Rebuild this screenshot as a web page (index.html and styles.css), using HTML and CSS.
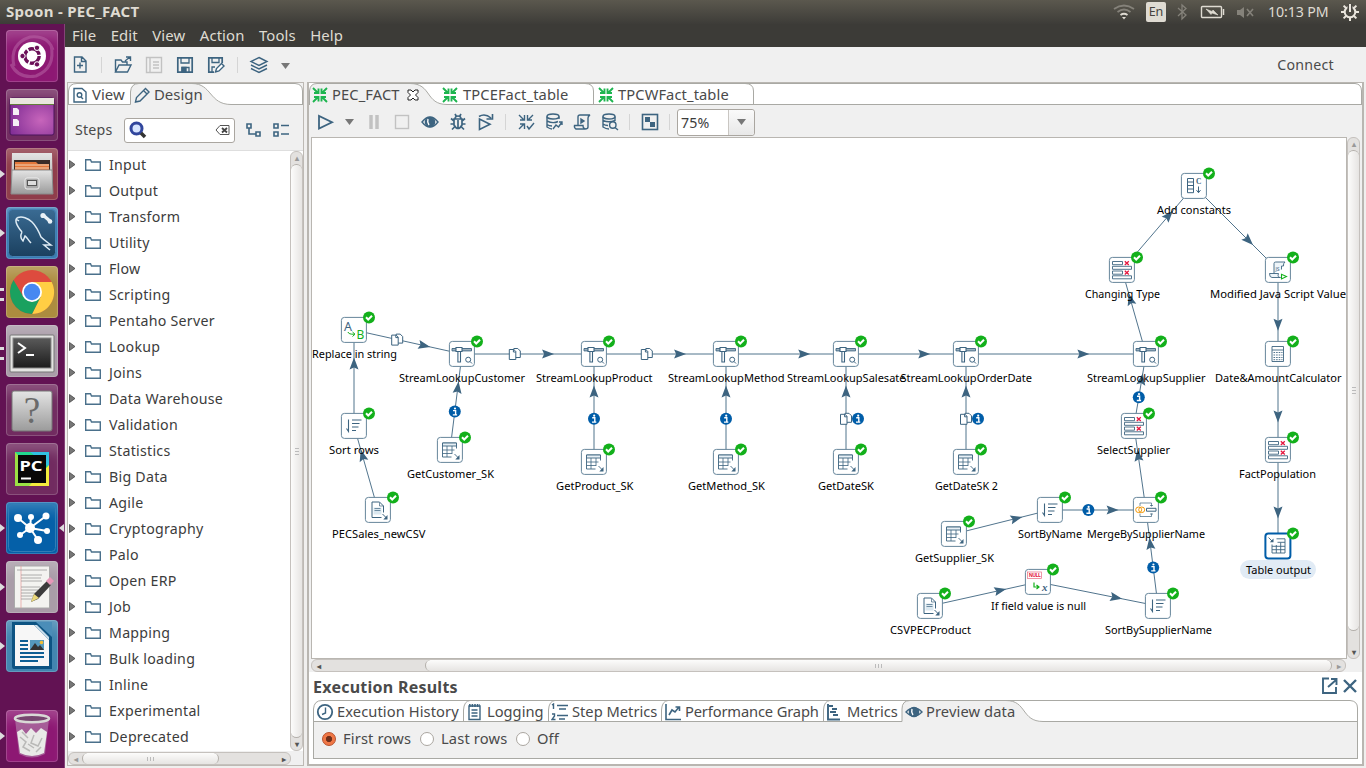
FILE: index.html
```html
<!DOCTYPE html>
<html lang="en">
<head>
<meta charset="utf-8">
<title>Spoon - PEC_FACT</title>
<link rel="stylesheet" href="styles.css">
</head>
<body>
<svg class="defs" width="0" height="0">
  <defs>
    <linearGradient id="steel" x1="0" y1="0" x2="0" y2="1"><stop offset="0" stop-color="#e4e4e4"/><stop offset="1" stop-color="#9b9b9b"/></linearGradient>
    <linearGradient id="dark" x1="0" y1="0" x2="0" y2="1"><stop offset="0" stop-color="#5a5a5a"/><stop offset="1" stop-color="#1c1c1c"/></linearGradient>
    <linearGradient id="sea" x1="0" y1="0" x2="0" y2="1"><stop offset="0" stop-color="#3a6b93"/><stop offset="1" stop-color="#1b405f"/></linearGradient>
    <radialGradient id="desk" cx=".7" cy=".6" r=".8"><stop offset="0" stop-color="#c765bb"/><stop offset="1" stop-color="#7d2b93"/></radialGradient>
    <g id="i-badge"><circle r="6" fill="#13b01b"/><path d="M-3-.2L-.8 2 3-1.8" fill="none" stroke="#fff" stroke-width="2"/></g>
    <g id="i-info"><circle r="6" fill="#005da8"/><path d="M-1.8-1H.8V3M-2 3.3H2.3" fill="none" stroke="#fff" stroke-width="1.4"/><circle cx=".2" cy="-3.1" r="1.1" fill="#fff"/></g>
    <g id="i-copy" fill="#fff" stroke="#3d6480" stroke-width="1"><path d="M-1-5.5H3L5.5-3V3.5H-1Z"/><path d="M-5.5-4.5H-1L1-2.5V5.5H-5.5Z"/><path d="M-1.4-4.5V-2H1" fill="none"/></g>
    <path id="i-arrow" d="M6 0L-6-4.5-4 0-6 4.5Z" fill="#3d6480"/>
    <g id="s-lookup" fill="none" stroke="#3d6480"><path d="M-9.5-5H10V-2.6H-9.5Z" fill="#9db1bf" stroke-width=".9"/><path d="M-5.5-6H.5V-2H-5.5ZM-3.6-2V8.5H-1V-2" fill="#fff" stroke-width="1.1"/><circle cx="6.7" cy="6.2" r="2.5"/><path d="M8.5 8L10.5 10"/></g>
    <g id="s-table" fill="none" stroke="#3d6480" stroke-width=".9"><path d="M7-1V-6.5H-7V7.5H2"/><path d="M-7-3.5H7V-6.5H-7Z" fill="#e8f0f6"/><path d="M-7 .5H5M-7 4H2.5M-2.5-3.5V7.5M2.5-3.5V4.5" stroke-width=".8"/><path d="M5 4.5L9 8.5"/><path d="M10 5.5V10H5.8Z" fill="#3d6480" stroke="none"/></g>
    <g id="s-file" fill="none" stroke="#3d6480"><path d="M2-7.5H-5.5V8H4M2-7.5L6-3.5V3"/><path d="M-4-2H4V5H-4Z" fill="#dbe8f0" stroke="none"/><path d="M2-7V-3.5H6M-3-1H3M-3 1H3" stroke-width=".7"/><path d="M5 4.5L9 8.5"/><path d="M10 5.5V10H5.8Z" fill="#3d6480" stroke="none"/></g>
    <g id="s-sort" fill="none" stroke="#3d6480"><path d="M-5-6V5M-7 3L-5 6V3M-1.5-5.5H8M-1.5-2H6M-1.5 1.5H5M-1.5 5H2.5" stroke-width="1.1"/></g>
    <g id="s-select" fill="#fff" stroke="#3d6480" stroke-width=".9"><path d="M-9-8H1V-4.8H-9ZM-9-3.2H10V-.2H-9ZM-9 1.5H1V4.7H-9ZM-9 6.3H10V9.3H-9Z"/><path d="M3.3-8.3L7.3-4.6M7.3-8.3L3.3-4.6M3.3 1.3L7.3 5M7.3 1.3L3.3 5" stroke="#e5173f" stroke-width="1.3"/></g>
    <g id="s-replace"><text x="-9.5" y="1" font-size="12.5" fill="#3d6480">A</text><text x="3" y="9.3" font-size="12" fill="#13b01b">B</text><path d="M-5.5 2.5Q-5 5 1 4.7M-1 2.5L1.5 4.7-1 7" fill="none" stroke="#13b01b"/></g>
    <g id="s-constant" fill="none" stroke="#3d6480"><path d="M-6-7H0V7.2H-6ZM-6-3.5H0M-6 0H0M-6 3.5H0M5 1V7M3 4.7L5 7.2 7 4.7"/><text x="2.5" y="-2" class="serif" font-size="7.5" font-weight="bold" fill="#3d6480" stroke="none">C</text></g>
    <g id="s-script" fill="none" stroke="#3d6480" stroke-width=".9"><path d="M-3.5 4V-6Q-3.5-7.5-1.8-7.5H7.5Q5.5-6 6-3.5H4V0M-8 4H1Q-.5 8 3 8H-5.5Q-8 8-8 4" fill="#eef5f9"/><text x="-2" y="1.5" font-size="5" fill="#3d6480" stroke="none">JS</text><path d="M4 4.8V9.5L9 7.1Z" fill="#fff" stroke="#13b01b" stroke-width="1.1"/></g>
    <g id="s-calc" fill="none" stroke="#3d6480" stroke-width=".9"><path d="M-5.5-7H6V8H-5.5ZM-5.5-3.5H6"/><path d="M-4-1H5M-4 1.5H5M-4 4H5M-4 6.2H5" stroke-dasharray="1.6 1"/></g>
    <g id="s-merge" fill="none" stroke="#3d6480"><ellipse cx="-6.8" cy=".3" rx="3" ry="2.8" stroke="#f29a0c"/><ellipse cx="-3.8" cy=".3" rx="3" ry="2.8" stroke="#f29a0c"/><path d="M-5.5-3.5V-6.5H6V-3M-5.5 4V7H6V4M4.5-4H7.5M4.5 4.5H7.5" stroke-width=".7"/><path d="M1-1.2H10.5V1.7H1Z" fill="#fff"/></g>
    <g id="s-null"><rect x="-10" y="-9.5" width="14" height="6.5" fill="#fff" stroke="#e96a80" stroke-width=".7"/><text x="-8.8" y="-4.3" font-size="5" font-weight="bold" fill="#e5173f" textLength="12">NULL</text><path d="M-3.5 1V5.5H1M-1 3.5L1.5 5.5-1 7.5" fill="none" stroke="#13b01b" stroke-width="1.2"/><text x="4.5" y="9" class="serif" font-size="11" font-weight="bold" font-style="italic" fill="#3d6480">x</text></g>
    <g id="s-output" fill="none" stroke="#3d6480" stroke-width=".9"><path d="M-1-6.7H7.5V7.5H-5.5V-1M7.5-3.2H0M-5.5 .8H7.5M-5.5 4.2H7.5M-1.2-.5V7.5M3.2-3V7.5M-9-8L-5-4"/><path d="M-4-7V-3.3H-7.7Z" fill="#3d6480" stroke="none"/></g>
    <g id="i-trans" fill="none" stroke="#1db54f" stroke-width="1.9"><path d="M1 1L6 6M2 6H6.5V1.5M15 1L10 6M9.5 1.5V6H14M1 15L6 10M2 10H6.5V14.5M15 15L10 10M9.5 14.5V10H14"/></g>
  </defs>
</svg>

<header class="panel">
  <div class="title">Spoon - PEC_FACT</div>
  <div class="indicators">
    <svg width="22" height="18" fill="none" stroke-width="1.8"><path d="M1 6Q11-1 21 6M4.5 9Q11 4 17.5 9" stroke="#85827a"/><path d="M7.5 12Q11 9.5 14.5 12" stroke="#dfdbd2"/><path d="M9 14H13L11 16.5Z" fill="#dfdbd2"/></svg>
    <span class="lang">En</span>
    <svg width="10" height="18" fill="none" stroke="#85827a" stroke-width="1.3"><path d="M1 5L9 12 5 16V2L9 5.5 1 13"/></svg>
    <svg width="26" height="18" fill="none" stroke="#dfdbd2" stroke-width="1.4"><rect x="1.5" y="3.5" width="20" height="11" rx="1"/><path d="M23.5 6V12" stroke-width="1.5"/><path d="M6 6L12 8.5 13 7 18 12 12 10 11 11.5Z" fill="#dfdbd2" stroke-width=".6"/></svg>
    <svg width="18" height="18"><path d="M1 7H4L8 4V15L4 12H1Z" fill="#85827a"/><path d="M11 6L17 13M17 6L11 13" stroke="#85827a" stroke-width="1.6"/></svg>
    <span class="clock">10:13 PM</span>
    <svg width="18" height="18" fill="none" stroke="#eae6dd"><circle cx="9" cy="9" r="5.3" stroke-width="2"/><path d="M9 15V18M0 9H3M15 9H18M2.6 2.6L5 5M13 13L15.4 15.4M2.6 15.4L5 13M15.4 2.6L13 5" stroke-width="2"/><path d="M9 1V8" stroke="#4b4943" stroke-width="5"/><path d="M9 1V9" stroke-width="2"/></svg>
  </div>
</header>

<div class="shell">
<nav class="launcher">
  <div class="tile t-dash"><svg viewBox="0 0 52 52"><path d="M8 36Q3 14 24 7Q42 5 47 20M45 15Q50 38 30 46Q12 49 5 34" fill="none" stroke="#bb6aaa" stroke-width="3" opacity=".5"/><circle cx="26" cy="26" r="14" fill="#fff"/><circle cx="26" cy="26" r="7.2" fill="none" stroke="#6b1058" stroke-width="3.4" stroke-dasharray="13.4 1.7"/><g fill="#6b1058" stroke="#fff" stroke-width="1"><circle cx="16.5" cy="26" r="2.7"/><circle cx="31" cy="17.8" r="2.7"/><circle cx="31" cy="34.4" r="2.7"/></g></svg></div>
  <div class="tile t-plum"><svg viewBox="0 0 52 52"><rect x="4" y="9" width="44" height="37" rx="2" fill="url(#desk)" stroke="#4b155b"/><path d="M4 9H48V15H4Z" fill="#e9e7de"/><path d="M4 15.5H48" stroke="#637d3a"/><path d="M7 19H11L13 21V26H7ZM7 30H11L13 32V37H7Z" fill="#f5eff5"/></svg></div>
  <div class="tile t-red run"><svg viewBox="0 0 52 52"><path d="M6 5H46L47 45H5Z" fill="url(#steel)"/><path d="M8 12H44V22H8Z" fill="#3a2c28"/><path d="M9 14H30L32 16H43V22H9Z" fill="#e2763a"/><path d="M9 17H43M9 20H43" stroke="#f3d5b8"/><path d="M6 22H46L47 46H5Z" fill="url(#steel)" stroke="#8a8a8a"/><rect x="19" y="30" width="14" height="11" rx="2" fill="#aaa" stroke="#eee"/><rect x="21.5" y="32.5" width="9" height="5" fill="#ddd" stroke="#555"/></svg></div>
  <div class="tile t-sql run"><svg viewBox="0 0 52 52"><rect x="2.5" y="2.5" width="47" height="47" rx="4" fill="url(#sea)" stroke="#4481b5"/><path d="M16 25C10 18 8 12 12 10.5C16 9 22 11 26 15C31 20 33 25 35 30C38 33 41 35 45 38L38 38 44 43M16 25C14 29 15 32 17 34L19 29C21 30 22 33 25 36M13 14L10 12" fill="none" stroke="#dfecf5" stroke-width="1.5"/><path d="M37 8L45 15" stroke="#e9f1f7" stroke-width="3.2"/><circle cx="37" cy="8.5" r="2.6" fill="#e9f1f7"/><circle cx="44" cy="14.5" r="2.3" fill="#e9f1f7"/></svg></div>
  <div class="tile t-gold multi"><svg viewBox="0 0 52 52"><circle cx="26" cy="26" r="22" fill="#dd4b3e"/><path d="M26 16H45.7A22 22 0 0 1 26 48L34.5 31Z" fill="#ffce44"/><path d="M7.5 14L17.5 31 26 36 34.5 31 26 48A22 22 0 0 1 7.5 14Z" fill="#1aa15f"/><circle cx="26" cy="26" r="10" fill="#fff"/><circle cx="26" cy="26" r="8.2" fill="#4688f1"/></svg></div>
  <div class="tile t-silver multi"><svg viewBox="0 0 52 52"><rect x="4" y="10" width="44" height="37" rx="1" fill="#e4e4e2" stroke="#777"/><rect x="7" y="13" width="38" height="30" fill="url(#dark)" stroke="#888"/><path d="M18 18L25 23 18 28M26 30H34" transform="translate(-6 0)" fill="none" stroke="#fff" stroke-width="2"/></svg></div>
  <div class="tile t-plum"><svg viewBox="0 0 52 52"><rect x="6" y="7" width="40" height="40" rx="2" fill="url(#steel)" stroke="#777"/><text x="26" y="39" text-anchor="middle" class="serif" font-size="37" fill="#6a6a6a">?</text></svg></div>
  <div class="tile t-plum"><svg viewBox="0 0 52 52"><rect x="9" y="9" width="34" height="34" fill="#22d88f"/><path d="M9 9L43 43H9Z" fill="#9be044"/><path d="M24 9H43V24Z" fill="#31c1e2"/><path d="M43 22V43H23Z" fill="#f4ed3d"/><rect x="12" y="12" width="28" height="28" fill="#080808"/><text x="13.5" y="27.5" font-size="15" font-weight="bold" fill="#fff" textLength="23" lengthAdjust="spacingAndGlyphs">PC</text><path d="M15 35.5H25" stroke="#fff" stroke-width="2"/></svg></div>
  <div class="tile t-blue run focus"><svg viewBox="0 0 52 52"><rect x="2.5" y="2.5" width="47" height="47" rx="4" fill="none" stroke="#337db5"/><g stroke="#fff" stroke-width="2"><path d="M24 26L12 16M24 26L25 15M24 26L40 14M24 26L41 29M24 26L14 33M24 26L32 38"/></g><g fill="#fff"><circle cx="24" cy="26" r="5"/><circle cx="12" cy="16" r="4"/><circle cx="25" cy="15" r="3"/><circle cx="40" cy="14" r="3.5"/><circle cx="41" cy="29" r="3"/><circle cx="14" cy="33" r="3"/><circle cx="32" cy="38" r="4"/></g></svg></div>
  <div class="tile t-silver run"><svg viewBox="0 0 52 52"><rect x="8.5" y="5" width="35" height="42" fill="#f3f3f0" stroke="#aaa"/><path d="M15 5V47" stroke="#e79a9a" stroke-width=".7"/><path d="M11 9H41M15 14H36M15 17H35M15 20H36M15 26H34M15 29H32M15 32H31M15 35H30M15 38H30" stroke="#9a9a9a" stroke-width=".8"/><path d="M25 41L28 33 41 20 45 24 32 38Z" fill="#3b3b3b"/><path d="M25 41L28 33 33 37Z" fill="#e9d779"/><path d="M40 20L44 16 48 20 44 24Z" fill="#e798b9"/></svg></div>
  <div class="tile t-writer run"><svg viewBox="0 0 52 52"><path d="M6 2H44L46 4V49H8Q6 49 6 46Z" fill="#0d5382"/><path d="M30 2H46V17Z" fill="#4b8db8"/><path d="M9 5H28L43 20V46H9Z" fill="#f7f7f7"/><path d="M28 5L43 20V17L31 5Z" fill="#c7dce9"/><path d="M14 21H22M14 25H22M14 29H22M14 33H38M14 37H38M14 41H32" stroke="#0e5f94" stroke-width="1.8"/><rect x="24" y="20" width="14" height="10" fill="#5599bd"/><path d="M24 30L29 23 32 27 34 25 38 30Z" fill="#333"/><circle cx="35.5" cy="22.5" r="1.8" fill="#f1bd36"/></svg></div>
  <div class="tile t-dash run trash"><svg viewBox="0 0 52 52"><path d="M9 9L13 44Q26 51 39 44L43 9Z" fill="#b993b4" opacity=".55"/><path d="M11 22L16 19 20 24 25 18 30 23 35 18 41 22 38 43Q26 49 14 43Z" fill="#e9e9e7"/><path d="M14 27L20 32 17 37 24 41M28 25L25 33 32 36 36 28M30 42L35 37M16 22L22 28M22 34L28 38" stroke="#b9b9b7" stroke-width="1.5" fill="none"/><ellipse cx="26" cy="8.5" rx="17" ry="3.8" fill="#77466f" stroke="#d9d9d6" stroke-width="2.6"/></svg></div>
</nav>

<main class="app">
  <div class="menubar"><span>File</span><span>Edit</span><span>View</span><span>Action</span><span>Tools</span><span>Help</span></div>
  <div class="toolbar main-tools">
    <svg class="ic"><path d="M4.5 2H12L16 6V17H4.5ZM11.5 2V6.5H16M10 7.5V13.5M7 10.5H13"/></svg>
    <i class="rule"></i>
    <svg class="ic"><path d="M2.5 17V5H8L9.5 7H14V10M2.5 17L6 10H18L14.5 17ZM12 6L17 2M13 2H17.5V6"/></svg>
    <svg class="ic off"><path d="M2.5 2.5H17.5V17.5H2.5ZM6 3V17M9 7H15M9 10H15M9 13H15"/></svg>
    <svg class="ic"><path d="M2.8 2.8H17.2V17.2H2.8Z" stroke-width="1.7"/><path d="M6 3V8H14V3M7 17V12.5H14V17" stroke-width="1.3"/><path d="M7 12.5H11V17H7Z" fill="#3d6480"/></svg>
    <svg class="ic"><path d="M8 17.2H2.8V2.8H16.2V8" stroke-width="1.7"/><path d="M6 3V7.5H13V3M6 17V12H9" stroke-width="1.3"/><path d="M9.5 17L10.5 13.5 15.5 8.5 18 11 13 16Z" fill="#fff"/></svg>
    <i class="rule"></i>
    <svg class="ic"><path d="M10 2.5L18 6.5 10 10.5 2 6.5ZM2 10L10 14 18 10M2 13.5L10 17.5 18 13.5"/></svg>
    <svg class="drop"><path d="M0 0H9L4.5 6Z"/></svg>
    <span class="connect">Connect</span>
  </div>

  <div class="work">
    <aside class="side">
      <div class="tabs">
        <svg class="tabshape" viewBox="0 0 235 22"><path class="w" d="M.5 22V8Q1 .5 9 .5H227Q234.5 1 234.5 8V22Z"/><path class="g" d="M62.5 22V9Q63 .5 71 .5H124C144 .5 141 22 163 22Z"/><path class="l" d="M.5 22V8Q1 .5 9 .5H227Q234.5 1 234.5 8V22M0 21.5H62.5V9Q63 .5 71 .5H124C144 .5 141 21.5 163 21.5H235"/></svg>
        <div class="tabrow side-tabs">
          <svg class="ic s"><path d="M2 1.5H10L14 5V15H2Z"/><circle cx="7.5" cy="8" r="2.3"/><path d="M9 10L11 12"/></svg><span class="tv">View</span>
          <svg class="ic s"><path d="M1.5 15L2.5 10.5 11.5 1.5 15 5 6 14ZM9.5 3.5L13 7"/></svg><span class="td">Design</span>
        </div>
      </div>
      <div class="steps">
        <span>Steps</span>
        <div class="search">
          <svg width="18" height="18"><circle cx="7.5" cy="7.5" r="5.5" fill="#d7e5ff" stroke="#31469d" stroke-width="3"/><path d="M12 12L16 16" stroke="#333" stroke-width="3.5"/></svg>
          <svg width="15" height="12"><path d="M5 1.5H14V10.5H5L1 6Z" fill="#fff" stroke="#555"/><path d="M7 4L12 8.5M12 4L7 8.5" stroke="#444" stroke-width="1.8"/></svg>
        </div>
        <svg class="ic s"><path d="M2 2H6V6H2ZM11 10H15V14H11ZM4 6V12H11" stroke-width="1.6"/></svg>
        <svg class="ic wide"><path d="M2 2H6V6H2ZM2 10H6V14H2ZM9 3.5H17M9 12H17" stroke-width="1.6"/></svg>
      </div>
      <div class="treebox">
        <div class="tree" id="tree"></div>
        <div class="vscroll"><b>&#9652;</b><div class="thumb"></div><b class="on">&#9662;</b></div>
      </div>
      <div class="hscroll side-h"><b>&#9666;</b><div class="thumb"><u></u></div><div class="rest"></div><b class="on">&#9656;</b></div>
    </aside>

    <div class="sash"></div>

    <section class="editor">
      <div class="tabs">
        <svg class="tabshape" viewBox="0 0 1053 22" preserveAspectRatio="none"><path class="w" d="M0 22V0H1053V22Z"/><path class="g" d="M0 22V8Q1 .5 8 .5H101C123 .5 116 22 138 22Z"/><path class="l" d="M.5 22V8Q1 .5 8 .5H101C123 .5 116 21.5 138 21.5H1053M8 .5H1046Q1052.5 1 1052.5 8V22M276 .5Q284.5 .5 284.5 8V21M436 .5Q444.5 .5 444.5 8V21"/></svg>
        <div class="tabrow edit-tabs">
          <svg width="16" height="16"><use href="#i-trans"/></svg><span class="e1">PEC_FACT</span><svg class="cross" width="12" height="12"><path d="M1 1H4L6 3 8 1H11V3.5L8.5 6 11 8.5V11H8L6 9 4 11H1V8.5L3.5 6 1 3.5Z" fill="#fff" stroke="#222"/></svg>
          <svg width="16" height="16"><use href="#i-trans"/></svg><span class="e2">TPCEFact_table</span>
          <svg width="16" height="16"><use href="#i-trans"/></svg><span class="e3">TPCWFact_table</span>
        </div>
      </div>
      <div class="toolbar edit-tools">
        <svg class="ic"><path d="M4 4V16.5L17 10.2Z" stroke-width="1.8"/></svg>
        <svg class="drop n"><path d="M2 0H11L6.5 6Z"/></svg>
        <svg class="ic off"><path d="M7 3V17M13 3V17" stroke-width="3.5"/></svg>
        <svg class="ic off"><rect x="3.5" y="3.5" width="13" height="13"/></svg>
        <svg class="ic"><path d="M2 10Q10 0 18 10Q10 20 2 10Z"/><circle cx="10" cy="10" r="4.6" fill="#3d6480"/><path d="M8 7Q7 10 9 13" stroke="#fff"/></svg>
        <svg class="ic"><path d="M6 7H14V13Q10 20 6 13ZM7 7Q7 4 10 4Q13 4 13 7M7 2L8.5 4.5M13 2L11.5 4.5M6 9L3 6.5M14 9L17 6.5M6 12H2.5M14 12H17.5M6.5 15L4 17.5M13.5 15L16 17.5M10 8V17" stroke-width="1.7"/></svg>
        <svg class="ic"><path d="M3.5 7V17.5L14 12.2ZM3 4.5Q9 1 15 6M10.5 7H16.5V2" stroke-width="1.6"/></svg>
        <i class="rule"></i>
        <svg class="ic"><path d="M3 3L8 8M4 8H8.5V3M17 3L12 8M11.5 3V8H16M3 17L8 12M4 12H8.5V17M11 14L13 17 18 11"/></svg>
        <svg class="ic"><path d="M15 7V4.5M3 4.5V15Q6 17 8 17M3 9Q9 12 14 9.5M3 12.5Q5 14 8 14M9 17L12 13 14.5 15 18 10M15 10H18V13"/><ellipse cx="9" cy="4.5" rx="6" ry="2.5"/></svg>
        <svg class="ic"><path d="M6 13V5Q6 3 8 3H18Q16 4 16 6V15Q16 17 13 17H4Q2 16 2.5 13.5H11Q11 17 14 17"/><path d="M9 7V11L12 9Z" fill="#3d6480"/></svg>
        <svg class="ic"><path d="M15 9V4.5M3 4.5V15Q6 17 9 17M3 8.5Q9 11 15 8.5M3 12Q5 13.5 8 13.5"/><ellipse cx="9" cy="4.5" rx="6" ry="2.5"/><circle cx="12.8" cy="13" r="3.2"/><path d="M15 15.5L18 18"/></svg>
        <i class="rule"></i>
        <svg class="ic"><rect x="2.5" y="2.5" width="15" height="15" stroke-width="1.6"/><path d="M5 5H10V10H5ZM10 10H15V15H10Z" fill="#3d6480" stroke="none"/></svg>
        <i class="rule"></i>
        <div class="combo"><span>75%</span><em><svg class="drop"><path d="M0 0H9L4.5 6Z"/></svg></em></div>
      </div>
      <div class="canvasbox">
        <svg class="canvas" id="canvas" viewBox="312 138 1034 520"></svg>
        <div class="vscroll"><b>&#9652;</b><div class="thumb"></div><div class="rest"></div><b class="on">&#9662;</b></div>
      </div>
      <div class="hscroll edit-h"><b class="on">&#9666;</b><div class="rest"></div><div class="thumb"><u></u></div><b>&#9656;</b></div>
      <div class="results">
        <div class="rhead"><h2>Execution Results</h2>
          <svg class="ic"><path d="M9 2.5H3V17H16V11M8 11L16 4M11 3H16.5V9" stroke-width="1.9"/></svg><svg class="ic"><path d="M4 4L16 16M16 4L4 16" stroke-width="2.4"/></svg></div>
        <div class="tabs">
          <svg class="tabshape" viewBox="0 0 1045 22" preserveAspectRatio="none"><path class="w" d="M0 22V0H1045V22Z"/><path class="g" d="M589 22V9Q589 .5 597 .5H693C714 .5 708 22 730 22Z"/><path class="l" d="M.5 22V9Q1 .5 9 .5H1037Q1044.5 1 1044.5 8V22M150.5 21V10Q151 1 157 .5M235.5 21V10Q236 1 242 .5M348.5 21V10Q349 1 355 .5M510.5 21V10Q511 1 517 .5M0 21.5H589V9Q589 .5 597 .5H693C714 .5 708 21.5 730 21.5H1045"/></svg>
          <div class="tabrow res-tabs">
            <svg class="ic t"><circle cx="9" cy="9" r="7.2" stroke-width="1.8"/><path d="M9.5 4.5V10L6 11.5"/></svg><span class="r1">Execution History</span>
            <svg class="ic t"><path d="M2 3H13V16.5H2ZM4.5 7H10.5M4.5 10H10.5M4.5 13H10.5"/><path d="M2 2.5H13" stroke-width="3" stroke-dasharray="1.6 1"/></svg><span class="r2">Logging</span>
            <svg class="ic t"><path d="M6 2.5H17M8 6H15M6 12.5H17M8 16H14M1 2L2.5 1V6M1 11H3.5V13L1 16.5H4.5"/></svg><span class="r3">Step Metrics</span>
            <svg class="ic t"><path d="M2 1V16.5H17M5 12L8 7 11 9 15 4M11.5 4H15.5V8" stroke-width="1.6"/></svg><span class="r4">Performance Graph</span>
            <svg class="ic t"><path d="M3 1V16.5H15M4 3H8M7 6H12M5 9H11M8 12H13" stroke-width="1.9"/></svg><span class="r5">Metrics</span>
            <svg class="ic t"><path d="M1 9Q9 1 17 9Q9 17 1 9Z"/><circle cx="9" cy="9" r="4.6" fill="#3d6480"/><path d="M7 6Q6 9 8 12" stroke="#fff"/></svg><span class="r6">Preview data</span>
          </div>
        </div>
        <div class="radios"><i class="radio sel"></i><span class="o1">First rows</span><i class="radio"></i><span class="o2">Last rows</span><i class="radio"></i><span class="o3">Off</span></div>
      </div>
    </section>
  </div>
</main>
</div>
<script src="app.js"></script>
</body>
</html>
```
FILE: styles.css
```css
* { box-sizing: border-box; }
body { margin: 0; width: 1366px; height: 768px; overflow: hidden; display: flex; flex-direction: column; background: #f0efee; color: #4a4a4a; font: 14.2px/20px "Noto Sans", "Open Sans", sans-serif; }
.defs { display: block; width: 0; height: 0; flex: none; }
svg { display: block; flex: none; }
span { white-space: nowrap; }
.serif { font-family: "Liberation Serif", serif; }

.panel { height: 24px; flex: none; display: flex; align-items: center; justify-content: space-between; padding: 0 7px 0 6px; background: linear-gradient(#5b584e, #3d3c38); color: #dfdbd2; }
.title { font-weight: bold; font-size: 15px; letter-spacing: .3px; padding-bottom: 2px; }
.indicators { display: flex; align-items: center; }
.indicators > :nth-child(1) { margin-right: 11px; }
.lang { width: 20px; height: 20px; border-radius: 2px; background: #dfdbd2; color: #45433e; font-size: 12.5px; text-align: center; margin-right: 11px; }
.indicators > :nth-child(3) { margin-right: 13px; }
.indicators > :nth-child(4) { margin-right: 10px; }
.indicators > :nth-child(5) { margin-right: 14px; }
.clock { width: 61px; margin-right: 12px; letter-spacing: -.1px; }

.shell { display: flex; flex: 1; min-height: 0; }
.launcher { width: 65px; flex: none; display: flex; flex-direction: column; gap: 7px; padding: 6px 0 6px 6px; background: #621253; border-right: 1px solid #854378; }
.tile { position: relative; width: 52px; height: 52px; flex: none; border-radius: 4px; box-shadow: inset 0 0 0 1px rgba(255,255,255,.18), inset 0 14px 12px -6px rgba(255,255,255,.2); }
.tile svg { width: 52px; height: 52px; }
.t-dash { background: #8d1873; }
.t-plum { background: #712b60; }
.t-red { background: #8f3c4a; }
.t-sql { background: #397bb3; }
.t-gold { background: #ac8c3f; }
.t-silver { background: #a99ca8; }
.t-blue { background: #0560a8; }
.t-writer { background: #4285b0; }
.trash { margin-top: auto; }
.run::before { content: ""; position: absolute; left: -6px; top: 22px; border: 4px solid transparent; border-left: 5px solid #ddd; border-right: 0; }
.multi::before { content: ""; position: absolute; left: -6px; top: 22px; width: 4px; height: 7px; border: solid #ddd; border-width: 3px 0; }
.focus::after { content: ""; position: absolute; right: -6px; top: 22px; border: 4px solid transparent; border-right: 5px solid #ddd; border-left: 0; }

.app { flex: 1; min-width: 0; display: flex; flex-direction: column; }
.menubar { height: 23px; flex: none; display: flex; gap: 14.5px; padding: 1px 7px; background: #3c3b37; color: #dfdbd2; font-size: 14.9px; letter-spacing: .1px; }
.toolbar { display: flex; align-items: center; }
.main-tools { height: 35px; flex: none; gap: 11px; padding: 0 32px 0 5px; background: #f0f0f0; }
.ic { width: 20px; height: 20px; fill: none; stroke: #3d6480; stroke-width: 1.4; }
.ic.s { width: 16px; height: 16px; }
.ic.t { width: 18px; height: 18px; }
.ic.wide { width: 18px; height: 16px; }
.ic.off { stroke: #c2c2c2; }
.drop { width: 9px; height: 6px; fill: #777; }
.main-tools .drop { margin: 2px 0 0 1px; }
.drop.n { width: 13px; }
.rule { width: 1px; height: 16px; background: #d5d5d5; flex: none; }
.connect { margin-left: auto; letter-spacing: .25px; }

.work { flex: 1; min-height: 0; display: flex; padding: 0 2px 2px; }
.side { width: 237px; flex: none; border: 1px solid #bdb9b4; display: flex; flex-direction: column; background: #f0f0f0; }
.sash { width: 3px; flex: none; }
.editor { flex: 1; min-width: 0; border: 2px solid #b9b6b1; border-top-width: 1px; display: flex; flex-direction: column; background: #f0f0f0; }

.tabs { display: grid; height: 22px; flex: none; }
.tabs > * { grid-area: 1 / 1; }
.tabshape { width: 100%; height: 22px; }
.tabshape .w { fill: #fff; }
.tabshape .g { fill: #f0f0f0; }
.tabshape .l { fill: none; stroke: #a9a9a4; stroke-width: 1; }
.tabrow { display: flex; align-items: center; height: 23px; }
.tabrow span { padding-bottom: 2px; }
.side-tabs { padding-left: 4px; font-size: 14.9px; }
.tv { width: 37px; margin-left: 4px; }
.td { margin-left: 4px; }
.side-tabs svg:nth-child(3) { margin-left: 5px; }
.edit-tabs { padding-left: 3px; font-size: 14.7px; }
.e1 { width: 71px; margin-left: 4px; letter-spacing: .1px; }
.cross { margin: 0 23px 0 4px; }
.e2 { width: 130px; margin-left: 5px; letter-spacing: .1px; }
.edit-tabs svg:nth-child(6) { margin-left: 5px; }
.e3 { margin-left: 4px; letter-spacing: .1px; }

.steps { height: 46px; flex: none; display: flex; align-items: center; padding: 5px 0 0 7px; border-bottom: 1px solid #dedede; }
.steps > span { width: 38px; letter-spacing: .2px; }
.steps > svg { margin-left: 10px; }
.steps > .wide { margin-left: 11px; }
.search { width: 111px; height: 25px; margin-left: 11px; display: flex; align-items: center; justify-content: space-between; padding: 0 4px; background: #fff; border: 1px solid #aaa6a0; border-radius: 3px; }
.treebox { flex: 1; min-height: 0; display: flex; background: #fff; }
.tree { flex: 1; padding-top: 1px; min-height: 0; overflow: hidden; color: #3c3c3c; }
.node { height: 26px; display: flex; align-items: center; }
.node span { margin-left: 7px; letter-spacing: .26px; }

.vscroll { width: 13px; flex: none; display: flex; flex-direction: column; background: #e3e1df; border-radius: 6px; border: 1px solid #c5c1bd; }
.vscroll b { height: 12px; font-size: 8px; line-height: 12px; text-align: center; color: #999; flex: none; }
.vscroll b.on, .hscroll b.on { color: #555; }
.vscroll .thumb { flex: 1; background: linear-gradient(90deg, #fcfcfb, #e6e4e2); border: 1px solid #b3afaa; border-width: 1px 0; border-radius: 6px; display: flex; align-items: center; justify-content: center; }
.vscroll .thumb::after { content: ""; width: 4px; height: 7px; background: repeating-linear-gradient(#bbb 0 1px, transparent 1px 3px); }
.vscroll .rest { height: 15px; }
.hscroll { height: 13px; flex: none; display: flex; background: #e3e1df; border-radius: 6px; border: 1px solid #c5c1bd; }
.hscroll b { width: 13px; font-size: 8px; line-height: 11px; text-align: center; color: #999; flex: none; }
.hscroll .thumb { background: linear-gradient(#fcfcfb, #e6e4e2); border: 1px solid #b3afaa; border-width: 0 1px; border-radius: 6px; display: flex; align-items: center; justify-content: center; }
.hscroll u { width: 7px; height: 4px; background: repeating-linear-gradient(90deg, #bbb 0 1px, transparent 1px 3px); }
.side-h { width: 223px; margin: 1px 0 0; }
.side-h .thumb { width: 137px; }
.side-h .rest { flex: 1; }

.edit-tools { height: 32px; flex: none; gap: 8px; padding: 1px 0 0 6px; }
.edit-tools .rule { width: 4px; background: linear-gradient(90deg, transparent 1px, #d5d5d5 1px 2px, transparent 2px); }
.combo { width: 78px; height: 27px; margin: 1px 0 0 -3px; display: flex; border: 1px solid #aaa6a0; border-radius: 3px; background: #fff; color: #3c3c3c; }
.combo span { width: 50px; padding: 3px 0 0 3px; letter-spacing: .1px; }
.combo em { flex: 1; display: flex; align-items: center; justify-content: center; border-left: 1px solid #c9c6c2; background: linear-gradient(#fafafa, #e8e8e8); border-radius: 0 3px 3px 0; }
.canvasbox { height: 522px; flex: none; display: flex; margin-left: 2px; }
.canvas { width: 1036px; height: 522px; background: #fff; border: 1px solid #b9b6b1; font-family: "Noto Sans", sans-serif; }
.canvas .link { stroke: #3d6480; stroke-width: .9; }
.canvas .label { font-size: 11px; fill: #000; }
.edit-h { width: 1035px; margin-left: 2px; }
.edit-h .rest { width: 100px; }
.edit-h .thumb { flex: 1; }

.results { flex: 1; background: #fff; padding: 0 4px 5px; display: flex; flex-direction: column; }
.rhead { height: 28px; flex: none; display: flex; align-items: center; margin-right: -2px; }
.rhead h2 { margin: 0 auto 0 0; padding-top: 1px; font-size: 16px; letter-spacing: .25px; }
.res-tabs { padding-left: 3px; font-size: 14.7px; }
.r1 { width: 130px; margin-left: 3px; letter-spacing: .08px; }
.r2 { width: 64px; margin-left: 2px; }
.r3 { width: 92px; margin-left: 3px; }
.r4 { width: 140px; margin-left: 3px; letter-spacing: -.15px; }
.r5 { width: 58px; margin-left: 4px; }
.r6 { margin-left: 3px; letter-spacing: .1px; }
.radios { flex: 1; display: flex; align-items: center; padding: 0 0 2px 8px; font-size: 14.7px; letter-spacing: .15px; background: #f0f0f0; border: 1px solid #a9a9a4; border-top: 0; }
.radios span { padding-bottom: 2px; }
.radio { width: 14px; height: 14px; border-radius: 50%; background: #fff; border: 1px solid #aaa6a0; flex: none; }
.radio.sel { background: radial-gradient(circle, #6e2f1b 0 2.8px, #f07746 3.4px); border-color: #b7502c; }
.o1 { width: 77px; margin-left: 7px; }
.o2 { width: 75px; margin-left: 7px; }
.o3 { margin-left: 7px; }
```
FILE: app.js
```javascript
const groups = ["Input", "Output", "Transform", "Utility", "Flow", "Scripting", "Pentaho Server", "Lookup", "Joins", "Data Warehouse", "Validation", "Statistics", "Big Data", "Agile", "Cryptography", "Palo", "Open ERP", "Job", "Mapping", "Bulk loading", "Inline", "Experimental", "Deprecated"];
document.getElementById("tree").innerHTML = groups.map(g =>
  `<div class="node"><svg width="34" height="16"><path d="M1.5 3.5V11.5L7 7.5Z" fill="#777" stroke="#444" stroke-width=".8"/><path d="M17.7 13.3V2.7H22.5L23.5 5H32.3V13.3Z" fill="none" stroke="#4a708b" stroke-width="1.4"/></svg><span>${g}</span></div>`).join("");

// id: [centre x, centre y, icon, label, label left, label right]
const steps = {
  rep: [354, 330, "replace", "Replace in string", 312, 397],
  srt: [354, 426, "sort", "Sort rows", 329, 379],
  pec: [378, 510, "file", "PECSales_newCSV", 332, 425.5],
  cus: [462, 354, "lookup", "StreamLookupCustomer", 399, 525],
  gcu: [450, 450, "table", "GetCustomer_SK", 407, 494],
  pro: [594, 354, "lookup", "StreamLookupProduct", 536, 652.5],
  gpr: [594, 462, "table", "GetProduct_SK", 556, 633.5],
  met: [726, 354, "lookup", "StreamLookupMethod", 668, 784.5],
  gme: [726, 462, "table", "GetMethod_SK", 688, 765],
  sal: [846, 354, "lookup", "StreamLookupSalesate", 787, 905.5],
  gda: [846, 462, "table", "GetDateSK", 818, 874],
  ord: [966, 354, "lookup", "StreamLookupOrderDate", 900.5, 1032],
  gd2: [966, 462, "table", "GetDateSK 2", 935, 998],
  sup: [1146, 354, "lookup", "StreamLookupSupplier", 1087, 1205.5],
  sel: [1134, 426, "select", "SelectSupplier", 1097, 1170],
  cha: [1122, 270, "select", "Changing Type", 1085, 1160],
  add: [1194, 186, "constant", "Add constants", 1157, 1231],
  mjs: [1278, 270, "script", "Modified Java Script Value", 1210, 1346],
  cal: [1278, 354, "calc", "Date&amp;AmountCalculator", 1215, 1341.5],
  fac: [1278, 450, "select", "FactPopulation", 1239, 1316],
  out: [1278, 546, "output", "Table output", 1246, 1311],
  sbn: [1050, 510, "sort", "SortByName", 1018, 1082],
  mer: [1146, 510, "merge", "MergeBySupplierName", 1087, 1205],
  gsu: [954, 534, "table", "GetSupplier_SK", 915, 994],
  nul: [1038, 582, "null", "If field value is null", 991, 1086],
  csv: [930, 606, "file", "CSVPECProduct", 890, 971],
  sbs: [1158, 606, "sort", "SortBySupplierName", 1105, 1212]
};
// from, to, markers on the hop: c = copy rows, i = info stream
const hops = [["rep", "cus", "c"], ["srt", "rep"], ["pec", "srt"], ["gcu", "cus", "i"], ["cus", "pro", "c"], ["gpr", "pro", "i"], ["pro", "met", "c"], ["gme", "met", "i"], ["met", "sal"], ["gda", "sal", "ci"], ["sal", "ord"], ["gd2", "ord", "ci"], ["ord", "sup"], ["sel", "sup", "i"], ["mer", "sel"], ["sup", "cha"], ["cha", "add"], ["add", "mjs"], ["mjs", "cal"], ["cal", "fac"], ["fac", "out"], ["sbn", "mer", "i"], ["gsu", "sbn"], ["csv", "nul"], ["nul", "sbs"], ["sbs", "mer", "i"]];

let boxes = "", lines = "", marks = "", labels = "";
for (const [a, b, m = ""] of hops) {
  const [x1, y1] = steps[a], [x2, y2] = steps[b];
  const at = f => [x1 + (x2 - x1) * f, y1 + (y2 - y1) * f];
  const angle = Math.atan2(y2 - y1, x2 - x1) * 180 / Math.PI;
  lines += `<line class="link" x1="${x1}" y1="${y1}" x2="${x2}" y2="${y2}"/>`;
  marks += `<use href="#i-arrow" transform="translate(${at(.652)}) rotate(${angle})"/>`;
  const [mx, my] = at(.4);
  [...m].forEach((k, i) => { marks += `<use href="#${k === "c" ? "i-copy" : "i-info"}" x="${mx + i * 12}" y="${my}"/>`; });
}
for (const [id, [x, y, icon, label, l, r]] of Object.entries(steps)) {
  const on = id === "out";
  boxes += `<rect x="${x - 12.6}" y="${y - 12.6}" width="25" height="25" rx="3" fill="#fff" stroke="${on ? "#005da8" : "#66869b"}" stroke-width="${on ? 2 : 1}"/><use href="#s-${icon}" x="${x - .5}" y="${y - .5}"/><use href="#i-badge" x="${x + 15}" y="${y - 12.5}"/>`;
  if (on) boxes += `<rect x="1240" y="560" width="76" height="19" rx="9.5" fill="#e1ebf5"/>`;
  labels += `<text class="label" x="${l}" y="${y + 28}" textLength="${r - l}" lengthAdjust="spacingAndGlyphs">${label}</text>`;
}
document.getElementById("canvas").innerHTML = lines + boxes + marks + labels;
```
